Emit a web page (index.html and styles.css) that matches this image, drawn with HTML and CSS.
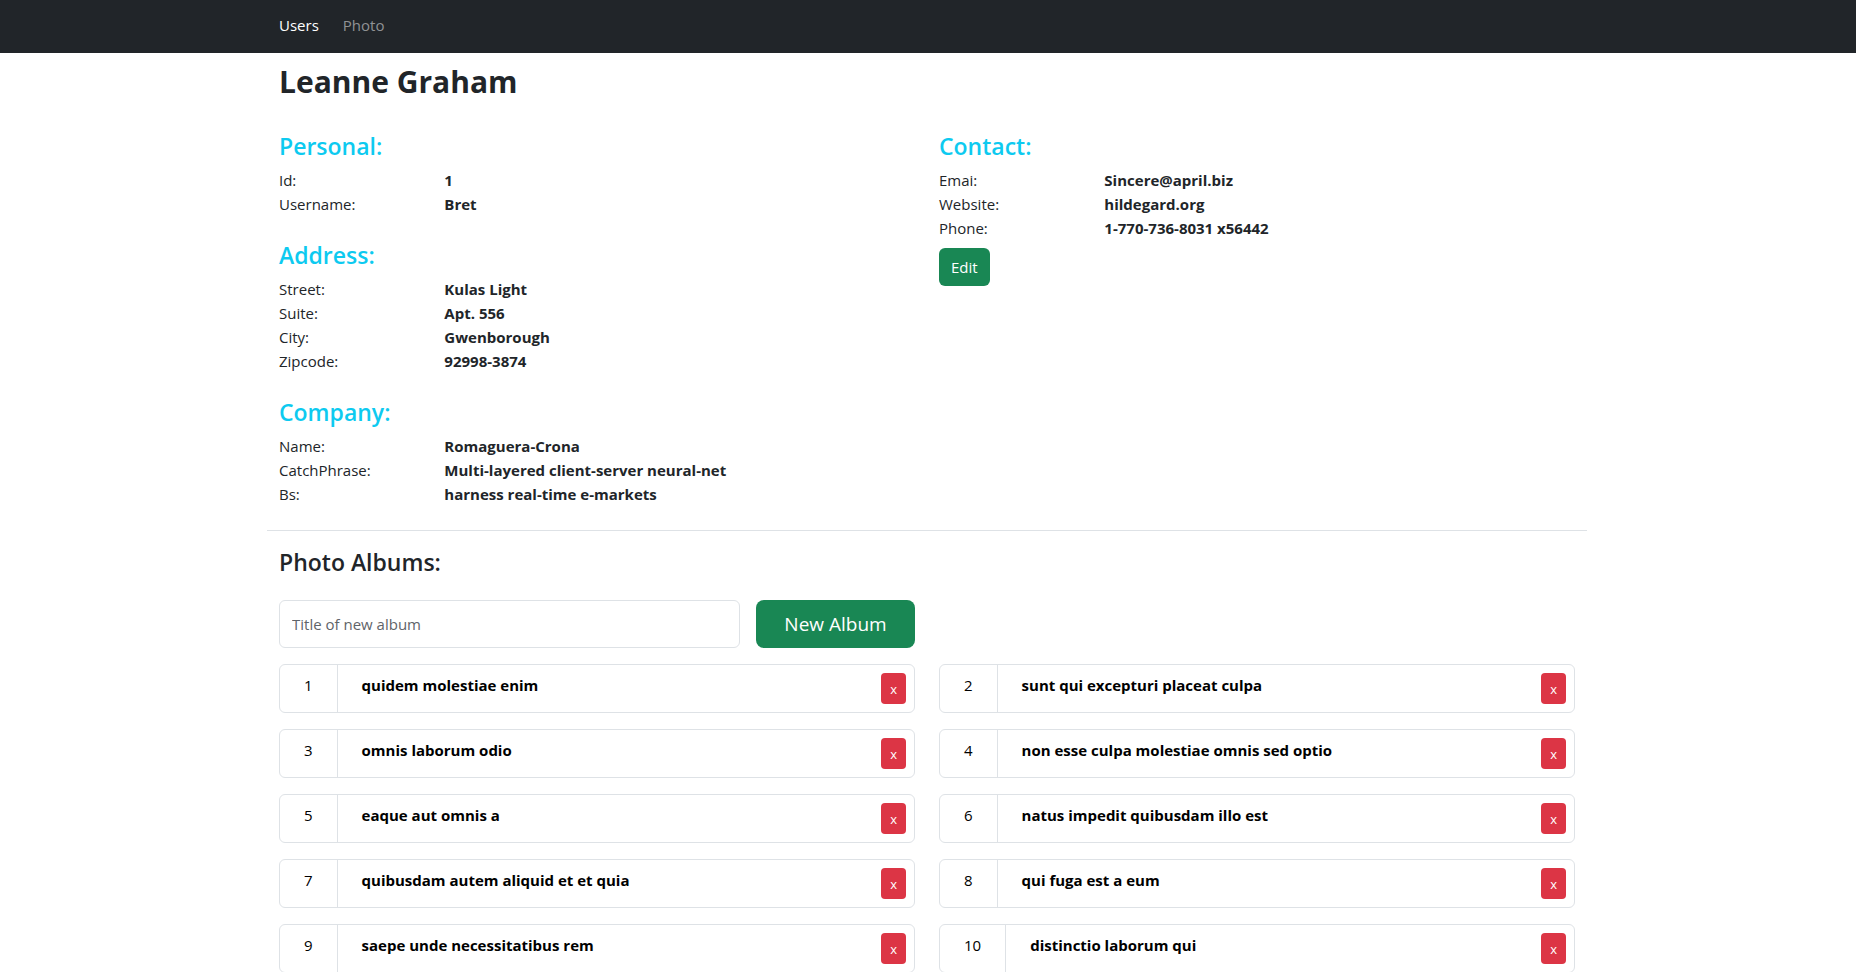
FILE: index.html
```
<!DOCTYPE html>
<html lang="en">
<head>
<meta charset="utf-8">
<meta name="viewport" content="width=device-width, initial-scale=1">
<title>Leanne Graham</title>
<link rel="stylesheet" href="styles.css">
</head>
<body>
<header class="navbar">
  <nav class="container nav">
    <a class="nav-link active" href="#users">Users</a>
    <a class="nav-link" href="#photo">Photo</a>
  </nav>
</header>
<main class="page">
  <div class="container">
    <h1 class="user-name">Leanne Graham</h1>
    <div class="columns profile">
      <div class="groups">
        <section>
          <h2 class="heading info">Personal:</h2>
          <dl class="details">
            <dt>Id:</dt><dd>1</dd>
            <dt>Username:</dt><dd>Bret</dd>
          </dl>
        </section>
        <section>
          <h2 class="heading info">Address:</h2>
          <dl class="details">
            <dt>Street:</dt><dd>Kulas Light</dd>
            <dt>Suite:</dt><dd>Apt. 556</dd>
            <dt>City:</dt><dd>Gwenborough</dd>
            <dt>Zipcode:</dt><dd>92998-3874</dd>
          </dl>
        </section>
        <section>
          <h2 class="heading info">Company:</h2>
          <dl class="details">
            <dt>Name:</dt><dd>Romaguera-Crona</dd>
            <dt>CatchPhrase:</dt><dd>Multi-layered client-server neural-net</dd>
            <dt>Bs:</dt><dd>harness real-time e-markets</dd>
          </dl>
        </section>
      </div>
      <section>
        <h2 class="heading info">Contact:</h2>
        <dl class="details">
          <dt>Emai:</dt><dd>Sincere@april.biz</dd>
          <dt>Website:</dt><dd>hildegard.org</dd>
          <dt>Phone:</dt><dd>1-770-736-8031 x56442</dd>
        </dl>
        <button class="btn btn-edit" type="button">Edit</button>
      </section>
    </div>
    <section class="albums">
      <h2 class="heading">Photo Albums:</h2>
      <div class="columns">
        <form class="album-form">
          <input class="album-input" type="text" placeholder="Title of new album" aria-label="Title of new album">
          <button class="btn btn-lg" type="button">New Album</button>
        </form>
      </div>
      <ul class="columns album-list">
        <li class="album"><span class="album-id">1</span><a class="album-title" href="#album-1">quidem molestiae enim</a><button class="btn-delete" type="button" aria-label="Delete album 1">x</button></li>
        <li class="album"><span class="album-id">2</span><a class="album-title" href="#album-2">sunt qui excepturi placeat culpa</a><button class="btn-delete" type="button" aria-label="Delete album 2">x</button></li>
        <li class="album"><span class="album-id">3</span><a class="album-title" href="#album-3">omnis laborum odio</a><button class="btn-delete" type="button" aria-label="Delete album 3">x</button></li>
        <li class="album"><span class="album-id">4</span><a class="album-title" href="#album-4">non esse culpa molestiae omnis sed optio</a><button class="btn-delete" type="button" aria-label="Delete album 4">x</button></li>
        <li class="album"><span class="album-id">5</span><a class="album-title" href="#album-5">eaque aut omnis a</a><button class="btn-delete" type="button" aria-label="Delete album 5">x</button></li>
        <li class="album"><span class="album-id">6</span><a class="album-title" href="#album-6">natus impedit quibusdam illo est</a><button class="btn-delete" type="button" aria-label="Delete album 6">x</button></li>
        <li class="album"><span class="album-id">7</span><a class="album-title" href="#album-7">quibusdam autem aliquid et et quia</a><button class="btn-delete" type="button" aria-label="Delete album 7">x</button></li>
        <li class="album"><span class="album-id">8</span><a class="album-title" href="#album-8">qui fuga est a eum</a><button class="btn-delete" type="button" aria-label="Delete album 8">x</button></li>
        <li class="album"><span class="album-id">9</span><a class="album-title" href="#album-9">saepe unde necessitatibus rem</a><button class="btn-delete" type="button" aria-label="Delete album 9">x</button></li>
        <li class="album"><span class="album-id">10</span><a class="album-title" href="#album-10">distinctio laborum qui</a><button class="btn-delete" type="button" aria-label="Delete album 10">x</button></li>
      </ul>
    </section>
  </div>
</main>
</body>
</html>
```
FILE: styles.css
```
*,
*::before,
*::after {
  box-sizing: border-box;
}

body {
  margin: 0;
  background: #fff;
  color: #212529;
  font-family: "Segoe UI", "Open Sans", "Noto Sans", sans-serif;
  font-size: 15px;
  line-height: 24px;
}

h1, h2, dl, dd, ul {
  margin: 0;
  padding: 0;
}

button, input {
  font: inherit;
}

.navbar {
  padding: 5px 2px 8px 0;
  background: #212529;
}

.page {
  padding-right: 2px;
}

.container {
  max-width: 1320px;
  margin: 0 auto;
}

.nav {
  display: flex;
  gap: 8px;
  padding: 0 4px;
}

.nav-link {
  padding: 8px;
  color: #909294;
  text-decoration: none;
}

.nav-link.active {
  color: #fff;
}

.user-name {
  padding: 8px 12px 0;
  font-size: 30px;
  font-weight: 700;
  line-height: 42px;
}

.columns {
  display: grid;
  grid-template-columns: 1fr 1fr;
  column-gap: 24px;
  padding: 0 12px;
}

.profile {
  padding-top: 28px;
  padding-bottom: 24px;
  border-bottom: 1px solid #dee2e6;
}

.groups {
  display: grid;
  gap: 24px;
}

.heading {
  margin-bottom: 6px;
  font-size: 23px;
  font-weight: 600;
  line-height: 31px;
}

.info {
  color: #0dcaf0;
}

.details {
  display: grid;
  grid-template-columns: 26% 1fr;
}

.details dd {
  font-weight: 700;
}

.btn {
  border: 0;
  background: #198754;
  color: #fff;
}

.btn-edit {
  height: 38px;
  margin-top: 8px;
  padding: 0 12px;
  border-radius: 6px;
}

.albums {
  padding-top: 16px;
}

.albums .heading {
  margin-bottom: 22px;
  padding: 0 12px;
}

.album-form {
  display: grid;
  grid-template-columns: 1fr 25%;
  gap: 16px;
}

.album-input {
  min-width: 0;
  height: 48px;
  padding: 0 12px;
  border: 1px solid #dee2e6;
  border-radius: 6px;
  background: #fff;
  color: #212529;
}

.album-input::placeholder {
  color: #5f6469;
  opacity: 1;
}

.btn-lg {
  border-radius: 8px;
  font-size: 19px;
}

.album-list {
  row-gap: 16px;
  margin-top: 16px;
  list-style: none;
}

.album {
  display: flex;
  border: 1px solid #dee2e6;
  border-radius: 6px;
  color: #000;
}

.album-id {
  padding: 8px 24px;
  border-right: 1px solid #dee2e6;
}

.album-title {
  flex: 1;
  padding: 8px 24px;
  color: inherit;
  font-weight: 700;
  text-decoration: none;
}

.btn-delete {
  height: 31px;
  margin: 8px;
  padding: 0 9px;
  border: 0;
  border-radius: 4px;
  background: #dc3545;
  color: #fff;
  font-size: 13px;
}
```
